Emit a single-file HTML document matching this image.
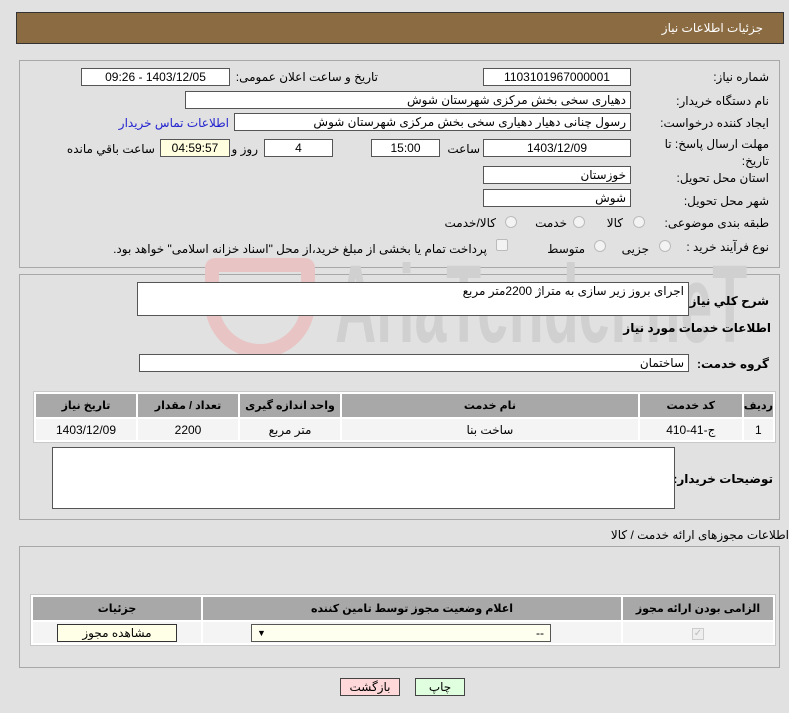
<!DOCTYPE html>
<html dir="rtl"><head><meta charset="utf-8"><style>
*{box-sizing:border-box;margin:0;padding:0}
body{width:789px;height:713px;background:#e1e1e1;font-family:Tahoma,"Liberation Sans","DejaVu Sans",sans-serif;font-size:12px;color:#000;position:relative;overflow:hidden}
.a{position:absolute;white-space:nowrap;z-index:2}
.in{position:absolute;z-index:2;background:#fff;border:1px solid #555;height:18px;line-height:16px;padding:0 4px;font-size:12px;white-space:nowrap;overflow:hidden}
.c{text-align:center}
.panel{position:absolute;border:1px solid #a8a8a8;background:#e1e1e1;z-index:0}
.lbl{position:absolute;z-index:2;white-space:nowrap;font-size:12px;text-align:right}
.rad{position:absolute;z-index:2;width:12px;height:12px;border-radius:50%;border:1px solid #bbb;background:#f3f3f3}
table{position:absolute;z-index:2;border-collapse:separate;border-spacing:2px;background:#fff;border:1px solid #c8c8c8}
th{background:#a8a8a8;font-weight:bold;font-size:11px;height:23px}
td{background:#f4f4f4;text-align:center;height:21px;font-size:12px}
.wm{position:absolute;left:0;top:250px;width:789px;height:120px;overflow:hidden;z-index:1}
</style></head><body>
<div class="a" style="left:16px;top:12px;width:768px;height:32px;background:#8b6b42;border:1px solid #333"></div>
<div class="a" style="right:26px;top:21px;color:#fff;font-size:12px">جزئیات اطلاعات نیاز</div>

<div class="panel" style="left:19px;top:60px;width:761px;height:208px"></div>
<div class="lbl" style="right:20px;top:70px">شماره نیاز:</div>
<div class="in c" style="left:483px;top:68px;width:148px">1103101967000001</div>
<div class="lbl" style="right:411px;top:70px">تاریخ و ساعت اعلان عمومی:</div>
<div class="in c" style="left:81px;top:68px;width:149px">1403/12/05 - 09:26</div>
<div class="lbl" style="right:20px;top:94px">نام دستگاه خریدار:</div>
<div class="in" style="left:185px;top:91px;width:446px">دهیاری سخی بخش مرکزی شهرستان شوش</div>
<div class="lbl" style="right:20px;top:116px">ایجاد کننده درخواست:</div>
<div class="in" style="left:234px;top:113px;width:397px">رسول چنانی دهیار دهیاری سخی بخش مرکزی شهرستان شوش</div>
<div class="lbl" style="right:560px;top:116px;color:#2323d0">اطلاعات تماس خریدار</div>
<div class="lbl" style="right:20px;top:136px;line-height:17px">مهلت ارسال پاسخ: تا<br>تاریخ:</div>
<div class="in c" style="left:483px;top:139px;width:148px">1403/12/09</div>
<div class="lbl" style="right:309px;top:142px">ساعت</div>
<div class="in c" style="left:371px;top:139px;width:69px">15:00</div>
<div class="in c" style="left:264px;top:139px;width:69px">4</div>
<div class="lbl" style="right:531px;top:142px">روز و</div>
<div class="in c" style="left:160px;top:139px;width:70px;background:#ffffe0">04:59:57</div>
<div class="lbl" style="right:634px;top:142px">ساعت باقي مانده</div>
<div class="lbl" style="right:20px;top:171px">استان محل تحویل:</div>
<div class="in" style="left:483px;top:166px;width:148px">خوزستان</div>
<div class="lbl" style="right:20px;top:194px">شهر محل تحویل:</div>
<div class="in" style="left:483px;top:189px;width:148px">شوش</div>
<div class="lbl" style="right:20px;top:216px">طبقه بندی موضوعی:</div>
<div class="rad" style="left:633px;top:216px"></div><div class="lbl" style="right:166px;top:216px">کالا</div>
<div class="rad" style="left:573px;top:216px"></div><div class="lbl" style="right:222px;top:216px">خدمت</div>
<div class="rad" style="left:505px;top:216px"></div><div class="lbl" style="right:293px;top:216px">کالا/خدمت</div>
<div class="lbl" style="right:20px;top:240px">نوع فرآیند خرید :</div>
<div class="rad" style="left:659px;top:240px"></div><div class="lbl" style="right:140px;top:242px">جزیی</div>
<div class="rad" style="left:594px;top:240px"></div><div class="lbl" style="right:204px;top:242px">متوسط</div>
<div class="a" style="left:496px;top:239px;width:12px;height:12px;border:1px solid #bbb;background:#f3f3f3;border-radius:2px"></div>
<div class="lbl" style="right:302px;top:242px">پرداخت تمام یا بخشی از مبلغ خرید،از محل "اسناد خزانه اسلامی" خواهد بود.</div>

<div class="panel" style="left:19px;top:274px;width:761px;height:246px"></div>
<div class="wm">
<div style="position:absolute;left:335px;top:-5px;font-size:110px;line-height:120px;font-weight:bold;color:#d0d0d0;font-family:'Liberation Sans',sans-serif;direction:ltr;transform:scaleX(0.52);transform-origin:left top">AriaTender.neT</div>
<div style="position:absolute;left:205px;top:8px;width:110px;height:100px;border:14px solid #e8c4c4;border-radius:10px 10px 55px 55px"></div>
</div>
<div class="lbl" style="right:20px;top:294px;font-weight:bold;font-size:12px">شرح کلي نیاز:</div>
<div class="in" style="left:137px;top:282px;width:552px;height:34px">اجرای بروز زیر سازی به متراژ 2200متر مربع</div>
<div class="lbl" style="right:18px;top:321px;font-weight:bold;font-size:12px">اطلاعات خدمات مورد نیاز</div>
<div class="lbl" style="right:20px;top:357px;font-weight:bold;font-size:12px">گروه خدمت:</div>
<div class="in" style="left:139px;top:354px;width:550px">ساختمان</div>
<table style="left:33px;top:391px;width:743px">
<tr><th style="width:28px">ردیف</th><th style="width:102px">کد خدمت</th><th>نام خدمت</th><th style="width:100px">واحد اندازه گیری</th><th style="width:100px">تعداد / مقدار</th><th style="width:100px">تاریخ نیاز</th></tr>
<tr><td>1</td><td>ج-41-410</td><td>ساخت بنا</td><td>متر مربع</td><td>2200</td><td>1403/12/09</td></tr>
</table>
<div class="lbl" style="right:16px;top:472px;font-weight:bold;font-size:12px">توضیحات خریدار:</div>
<div class="in" style="left:52px;top:447px;width:623px;height:62px"></div>

<div class="lbl" style="right:0px;top:528px">اطلاعات مجوزهای ارائه خدمت / کالا</div>
<div class="panel" style="left:19px;top:546px;width:761px;height:122px"></div>
<table style="left:30px;top:594px;width:746px">
<tr><th style="width:150px">الزامی بودن ارائه مجوز</th><th>اعلام وضعیت مجوز توسط تامین کننده</th><th style="width:168px">جزئیات</th></tr>
<tr><td><span style="display:inline-block;width:12px;height:12px;border:1px solid #ccc;background:#eee;color:#bbb;font-size:10px;line-height:10px">✓</span></td>
<td><div style="margin:0 auto;width:300px;height:18px;border:1px solid #555;background:#fffff0;text-align:right;padding:0 6px;line-height:16px;position:relative;left:-11px">--<span style="position:absolute;left:5px;font-size:9px">▼</span></div></td>
<td><div style="margin:0 auto;width:120px;height:18px;border:1px solid #333;background:#ffffe8;line-height:16px">مشاهده مجوز</div></td></tr>
</table>
<div class="a c" style="left:340px;top:678px;width:60px;height:18px;border:1px solid #444;background:#ffd9d9;line-height:16px">بازگشت</div>
<div class="a c" style="left:415px;top:678px;width:50px;height:18px;border:1px solid #444;background:#dfffdf;line-height:16px">چاپ</div>
</body></html>
